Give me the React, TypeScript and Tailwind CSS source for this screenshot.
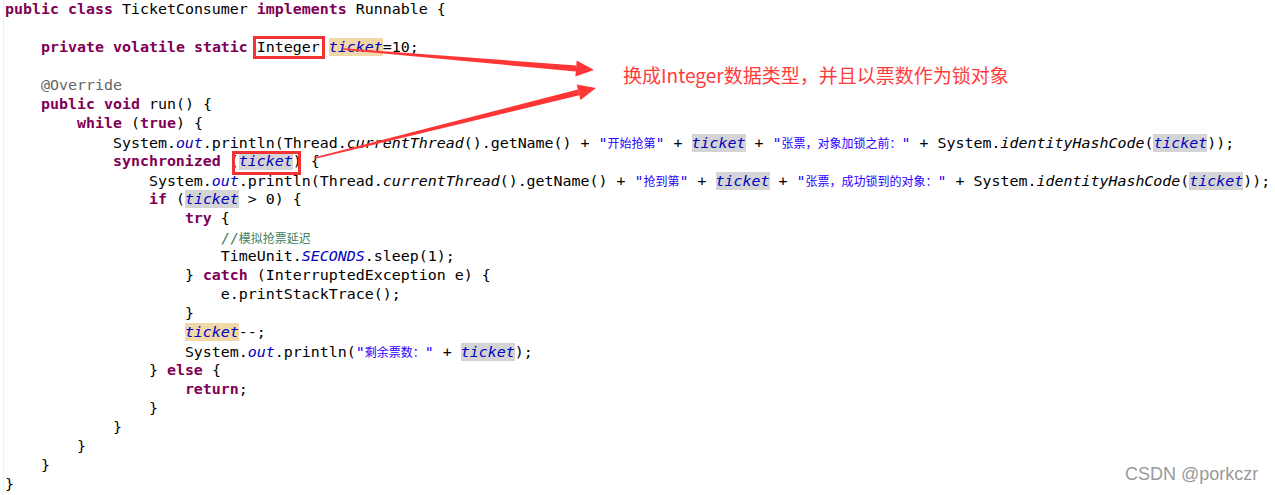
import type { ReactNode } from "react"

// eclipse-like token spans
const K = ({ children }: { children: ReactNode }) => <span className="font-bold text-[#7f0055]">{children}</span>
const F = ({ children }: { children: ReactNode }) => <span className="italic text-[#0000c0]">{children}</span>
const M = ({ children }: { children: ReactNode }) => <span className="italic">{children}</span>
const C = ({ children }: { children: ReactNode }) => (
    <span className="font-['Noto_Sans_CJK_SC',sans-serif] text-[12px]">{children}</span>
)
const S = ({ children }: { children: ReactNode }) => <span className="text-[#2a00ff]">{children}</span>
const T = ({ write }: { write?: boolean }) => (
    <span className={write ? "italic text-[#0000c0] bg-[#f0d8a8]" : "italic text-[#0000c0] bg-[#d4d4d4]"}>ticket</span>
)

const Line = ({ indent = 0, children }: { indent?: number; children?: ReactNode }) => (
    <div className="h-[19px] leading-[19px] whitespace-pre">
        {"    ".repeat(indent)}
        {children}
    </div>
)

const arrow = (x1: number, y1: number, x2: number, y2: number) => {
    const len = Math.hypot(x2 - x1, y2 - y1)
    const ux = (x2 - x1) / len
    const uy = (y2 - y1) / len
    const nx = -uy
    const ny = ux
    const bx = x2 - ux * 18
    const by = y2 - uy * 18
    const p = (x: number, y: number) => `${x.toFixed(1)},${y.toFixed(1)}`
    const shaft = [
        p(x1 + nx * 0.8, y1 + ny * 0.8),
        p(bx + nx * 3, by + ny * 3),
        p(bx - nx * 3, by - ny * 3),
        p(x1 - nx * 0.8, y1 - ny * 0.8),
    ].join(" ")
    const head = [p(bx + nx * 8, by + ny * 8), p(x2, y2), p(bx - nx * 8, by - ny * 8)].join(" ")
    return { shaft, head }
}

export default function App() {
    const a1 = arrow(343, 49, 594, 70)
    const a2 = arrow(315, 158, 596, 88)

    return (
        <div className="relative w-[1275px] h-[495px] overflow-hidden bg-white text-black">
            <div className="ml-[3px] pl-[1px] border-l border-[#efefef] h-full font-['DejaVu_Sans_Mono',monospace] text-[14.95px]">
                <Line>
                    <K>public</K> <K>class</K> TicketConsumer <K>implements</K> Runnable {"{"}
                </Line>
                <Line />
                <Line indent={1}>
                    <K>private</K> <K>volatile</K> <K>static</K> Integer <T write />=10;
                </Line>
                <Line />
                <Line indent={1}>
                    <span className="text-[#646464]">@Override</span>
                </Line>
                <Line indent={1}>
                    <K>public</K> <K>void</K> run() {"{"}
                </Line>
                <Line indent={2}>
                    <K>while</K> (<K>true</K>) {"{"}
                </Line>
                <Line indent={3}>
                    System.<F>out</F>.println(Thread.<M>currentThread</M>().getName() + <S>"<C>开始抢第</C>"</S> + <T /> + <S>"<C>张票，对象加锁之前：</C>"</S> + System.<M>identityHashCode</M>(<T />));
                </Line>
                <Line indent={3}>
                    <K>synchronized</K> (<T />) {"{"}
                </Line>
                <Line indent={4}>
                    System.<F>out</F>.println(Thread.<M>currentThread</M>().getName() + <S>"<C>抢到第</C>"</S> + <T /> + <S>"<C>张票，成功锁到的对象：</C>"</S> + System.<M>identityHashCode</M>(<T />));
                </Line>
                <Line indent={4}>
                    <K>if</K> (<T /> &gt; 0) {"{"}
                </Line>
                <Line indent={5}>
                    <K>try</K> {"{"}
                </Line>
                <Line indent={6}>
                    <span className="text-[#3f7f5f]">//<C>模拟抢票延迟</C></span>
                </Line>
                <Line indent={6}>
                    TimeUnit.<F>SECONDS</F>.sleep(1);
                </Line>
                <Line indent={5}>
                    {"} "}<K>catch</K> (InterruptedException e) {"{"}
                </Line>
                <Line indent={6}>e.printStackTrace();</Line>
                <Line indent={5}>{"}"}</Line>
                <Line indent={5}>
                    <T write />--;
                </Line>
                <Line indent={5}>
                    System.<F>out</F>.println(<S>"<C>剩余票数：</C>"</S> + <T />);
                </Line>
                <Line indent={4}>
                    {"} "}<K>else</K> {"{"}
                </Line>
                <Line indent={5}>
                    <K>return</K>;
                </Line>
                <Line indent={4}>{"}"}</Line>
                <Line indent={3}>{"}"}</Line>
                <Line indent={2}>{"}"}</Line>
                <Line indent={1}>{"}"}</Line>
                <Line>{"}"}</Line>
            </div>

            {/* annotation boxes */}
            <div className="absolute left-[253px] top-[36px] w-[72px] h-[23px] border-[3px] border-[#f33333]" />
            <div className="absolute left-[232px] top-[151px] w-[69px] h-[24px] border-[3px] border-[#f33333]" />

            <svg className="absolute inset-0 pointer-events-none" width="1275" height="495">
                <polygon points={a1.shaft} fill="#ff3636" />
                <polygon points={a1.head} fill="#ff3636" />
                <polygon points={a2.shaft} fill="#ff3636" />
                <polygon points={a2.head} fill="#ff3636" />
            </svg>

            <div className="absolute left-[623px] top-[65px] leading-[19px] text-[19px] text-[#ff3c3c] font-['Noto_Sans_CJK_SC',sans-serif] whitespace-nowrap">
                换成Integer数据类型，并且以票数作为锁对象
            </div>

            <div className="absolute left-[1125px] top-[463px] text-[18px] leading-[22px] text-[#9a9a9a] font-['Liberation_Sans',sans-serif]">
                CSDN @porkczr
            </div>
        </div>
    )
}
